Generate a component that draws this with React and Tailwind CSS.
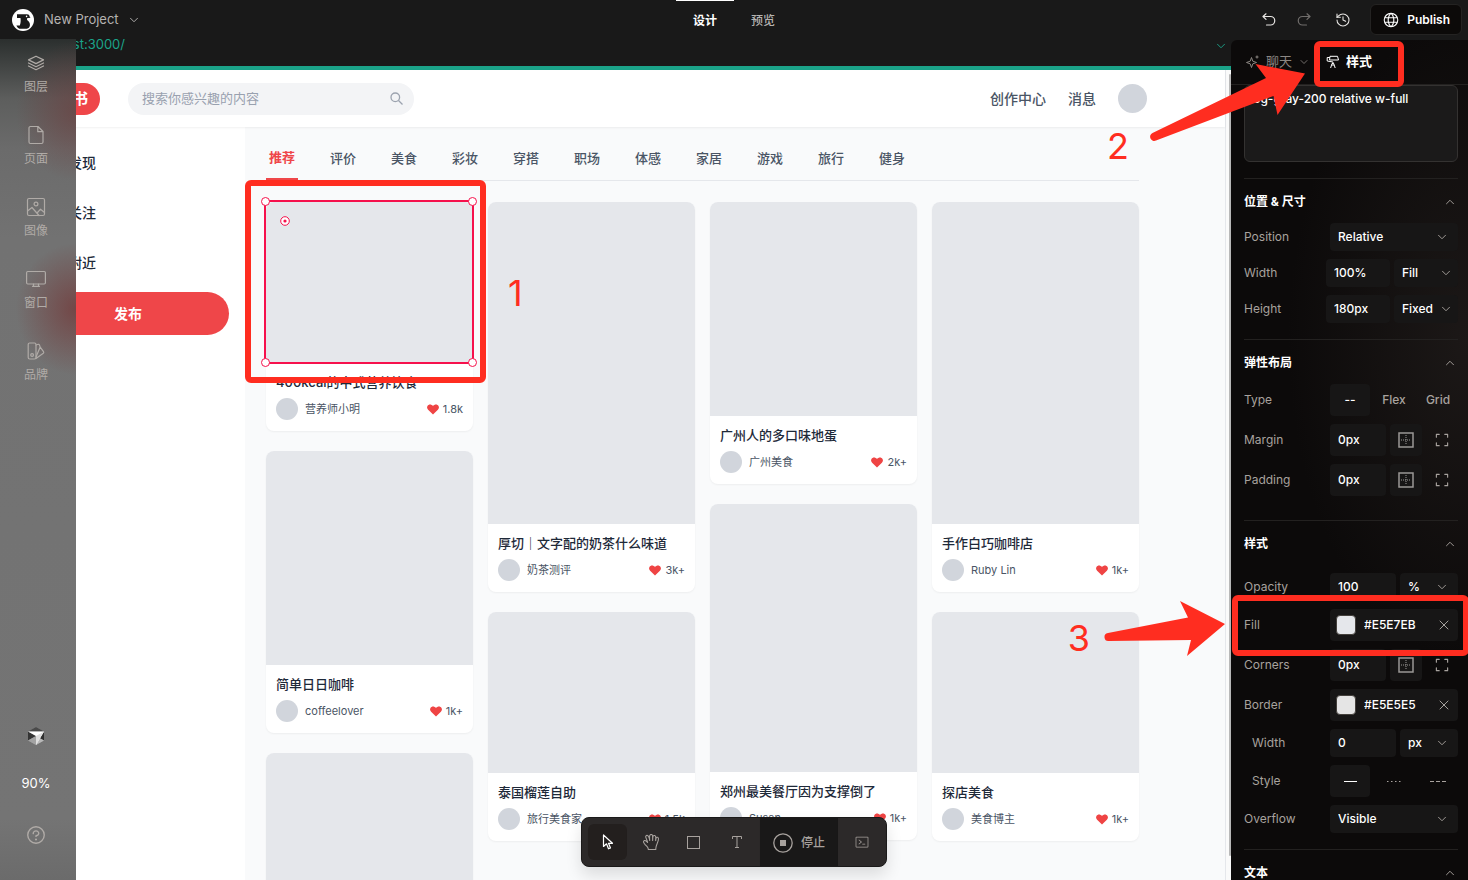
import React from 'react';
import { ChevronDown, ChevronUp, X, History } from 'lucide-react';
import { PiQuestion, PiGlobe, PiTerminalWindowLight, PiCornersOut } from 'react-icons/pi';
import { RxHand } from 'react-icons/rx';

function RailIcon({ children }) {
  return (
    <svg className="size-5" viewBox="0 0 20 20" fill="none" stroke="currentColor" strokeWidth="1.200" strokeLinecap="round" strokeLinejoin="round" aria-hidden="true">
      {children}
    </svg>
  );
}

const sideItems = [
  {
    label: '图层',
    icon: <RailIcon><path d="M10 3.200l7.500 3.700L10 10.600 2.500 6.900zM2.500 10l7.500 3.700 7.500-3.700M2.500 13l7.500 3.700 7.500-3.700" /></RailIcon>,
  },
  {
    label: '页面',
    icon: <RailIcon><path d="M4.500 1.500h7.500l5 5v10.500a1.500 1.500 0 0 1-1.500 1.500h-11A1.500 1.500 0 0 1 3 17V3a1.500 1.500 0 0 1 1.500-1.500zM11.800 1.500v5.200h5" /></RailIcon>,
  },
  {
    label: '图像',
    icon: <RailIcon><rect x="1.500" y="1.500" width="17" height="17" rx="1.500" /><circle cx="10" cy="7" r="1.900" /><path d="M1.500 14l4.500-3.500 7 8M11.500 15.500l3-3.300 4 3.300" /></RailIcon>,
  },
  {
    label: '窗口',
    icon: <RailIcon><rect x=".6" y="2.500" width="18.800" height="12.500" rx="1.200" /><path d="M7.500 15v2.300h5V15M6.500 17.300h7" /></RailIcon>,
  },
  {
    label: '品牌',
    icon: <RailIcon><rect x="2.200" y="2" width="7.800" height="16" rx="1.500" /><circle cx="6.100" cy="14" r="1.400" /><path d="M10 4l2.200-.7a1 1 0 0 1 1.200.6l.8 2.200L10 16M14.200 6.100l3.300 4.500a1.200 1.200 0 0 1-.2 1.600L10 17.500" /></RailIcon>,
  },
];

const categories = ['推荐', '评价', '美食', '彩妆', '穿搭', '职场', '体感', '家居', '游戏', '旅行', '健身'];

const columns = [
  [
    { h: 'h-[161px]', title: '400kcal的中式营养饮食', author: '营养师小明', likes: '1.8k', selected: true },
    { h: 'h-[214px]', title: '简单日日咖啡', author: 'coffeelover', likes: '1k+' },
    { h: 'h-[268px]' },
  ],
  [
    { h: 'h-[322px]', title: '厚切｜文字配的奶茶什么味道', author: '奶茶测评', likes: '3k+' },
    { h: 'h-[161px]', title: '泰国榴莲自助', author: '旅行美食家', likes: '1.5k' },
  ],
  [
    { h: 'h-[214px]', title: '广州人的多口味地蛋', author: '广州美食', likes: '2k+' },
    { h: 'h-[268px]', title: '郑州最美餐厅因为支撑倒了', author: 'Susan', likes: '1k+' },
  ],
  [
    { h: 'h-[322px]', title: '手作白巧咖啡店', author: 'Ruby Lin', likes: '1k+' },
    { h: 'h-[161px]', title: '探店美食', author: '美食博主', likes: '1k+' },
  ],
];

function Logo() {
  return (
    <svg className="size-[22px]" viewBox="0 0 22 22" aria-hidden="true">
      <circle cx="11" cy="11" r="11" fill="#fff" />
      <path d="M5 5.200h10c1.600 0 2.400.9 2.600 2.200l.9 1.300-2.600.2c-1.100.3-1.300 1.300-.5 2.400 1.700 1.300 2.800 2.900 2.500 5.100-.3 1.700-1.300 2.900-3 3.300H7.500c-1.500-.6-2.600-1.900-3.100-3.300h3.400c.9-2.200 1.100-4.700.7-7.400H5z" fill="#191919" />
      <circle cx="14.600" cy="7.400" r=".8" fill="#fff" />
    </svg>
  );
}

function CubeLogo() {
  return (
    <svg className="size-[18px]" viewBox="0 0 18 18" aria-hidden="true">
      <path d="M9 0l8 4.500v9L9 18l-8-4.500v-9z" fill="#8b8b8b" />
      <path d="M9 0l8 4.500H1z" fill="#4a4a4a" />
      <path d="M1 4.500L9 9 1 13.500z" fill="#343434" />
      <path d="M1 13.500L9 9v9z" fill="#a3a3a3" />
      <path d="M17 4.500v9l-4-2.300z" fill="#2e2e2e" />
      <path d="M17 13.500L9 18l3.500-7z" fill="#b9b9b9" />
      <path d="M1 4.500h16L9 18V9z" fill="#fff" />
      <path d="M17 4.500L9 9v9z" fill="#dedede" />
    </svg>
  );
}

function UndoIcon() {
  return (
    <svg className="size-[14px]" viewBox="0 0 14 14" fill="none" stroke="currentColor" strokeWidth="1.200" aria-hidden="true">
      <path d="M4 .8L1 3.500l3 2.900M1 3.500h7.500a4.200 4.200 0 0 1 0 8.500H4.500" strokeLinecap="round" strokeLinejoin="round" />
    </svg>
  );
}

function SparkleIcon() {
  return (
    <svg className="size-[15px]" viewBox="0 0 15 15" fill="none" stroke="currentColor" strokeWidth="1" aria-hidden="true">
      <path d="M6.500 2.500l1.300 3.700L11.500 7.500 7.800 8.800 6.500 12.500 5.200 8.800 1.500 7.500l3.700-1.300z" strokeLinejoin="round" />
      <path d="M12 .5v3M10.500 2h3" />
    </svg>
  );
}

function RollerIcon() {
  return (
    <svg className="size-[14px]" viewBox="0 0 14 14" fill="none" stroke="currentColor" strokeWidth="1" strokeLinejoin="round" aria-hidden="true">
      <path d="M4 1.300h7.500l1 3.700H3.500z" />
      <path d="M3.800 2.500H1.200v3.500l5.800 1v1.500" />
      <path d="M6 8.500h1.700l1.500 4.500M6 8.500L4.600 13M7 8.500V11" />
    </svg>
  );
}

function BoxSidesIcon() {
  return (
    <svg className="size-4" viewBox="0 0 16 16" fill="none" stroke="#9b9896" aria-hidden="true">
      <rect x="1" y="1" width="14" height="14" strokeWidth="1.500" />
      <path d="M8 3v10M3 8h10" strokeWidth="1" strokeDasharray="1 1" />
    </svg>
  );
}

function Heart() {
  return (
    <svg className="h-[11px] w-3" viewBox="0 0 24 22" fill="#ef4444" aria-hidden="true">
      <path d="M12 21L2.200 11.300A6.300 6.300 0 0 1 1 3.800C3 .1 8.700-.4 12 4c3.300-4.400 9-3.900 11-.2a6.300 6.300 0 0 1-1.200 7.500z" />
    </svg>
  );
}

function TopBar() {
  return (
    <header className="flex h-[39px] shrink-0 items-center px-[6px]">
      <div className="flex flex-1 items-center">
        <span className="ml-[6px]"><Logo /></span>
        <button className="ml-[10px] flex items-center gap-2 text-[13px] text-[#b5b3b1]">
          New Project <ChevronDown className="size-[14px]" strokeWidth={1.6} />
        </button>
      </div>
      <nav className="flex h-full text-[12px]">
        <button className="border-t border-white px-[17px] pt-px font-bold text-white">设计</button>
        <button className="border-t border-transparent px-[17px] pt-px font-medium text-[#b5b3b1]">预览</button>
      </nav>
      <div className="flex flex-1 items-center justify-end text-[#e8e6e4]">
        <button aria-label="Undo"><UndoIcon /></button>
        <button aria-label="Redo" className="ml-[21px] -scale-x-100 text-[#716e6c]"><UndoIcon /></button>
        <button aria-label="History" className="ml-6"><History className="size-4" strokeWidth={1.6} /></button>
        <button className="ml-[19px] flex h-[31px] items-center gap-[7px] rounded-md border border-[#242322] bg-[#0c0a09] px-[11px] text-[12px] font-semibold text-white">
          <PiGlobe className="size-[18px]" /> Publish
        </button>
      </div>
    </header>
  );
}

function SideRail() {
  return (
    <aside className="z-10 flex w-[76px] shrink-0 flex-col items-center bg-[radial-gradient(ellipse_60px_70px_at_76px_72px,rgba(110,60,60,0.6),transparent),radial-gradient(ellipse_60px_66px_at_76px_270px,rgba(115,60,60,0.8),transparent),linear-gradient(to_bottom,#2b2f2e_0,#3f4241_24px,#5d5e5d_60px,#6b6b6b_110px,#727272_200px,#747474_780px,#6b6b6b_100%)] pr-1 text-[#b0aba7]">
      {sideItems.map(({ icon, label }) => (
        <button key={label} className="flex h-[72px] w-full flex-col items-center gap-[5px] pt-[14px] text-[12px] leading-[18px]">
          {icon}
          {label}
        </button>
      ))}
      <button aria-label="Editor" className="mt-auto"><CubeLogo /></button>
      <span className="mt-7 text-[13px] leading-5 text-white">90%</span>
      <button aria-label="Help" className="mt-[31px] mb-[34px]"><PiQuestion className="size-[22px]" /></button>
    </aside>
  );
}

function Selection() {
  const dot = 'absolute size-[9px] rounded-full border border-[#f6114c] bg-white';
  return (
    <div className="absolute -top-[2px] -right-px -bottom-px -left-[2px] border-2 border-[#f6114c]">
      <span className={`${dot} -top-[5px] -left-[5px]`} />
      <span className={`${dot} -top-[5px] -right-[5px]`} />
      <span className={`${dot} -bottom-[5px] -left-[5px]`} />
      <span className={`${dot} -right-[5px] -bottom-[5px]`} />
      <svg className="absolute top-[14px] left-[14px] size-[10px]" viewBox="0 0 10 10" aria-hidden="true">
        <circle cx="5" cy="5" r="4.300" fill="#fff" stroke="#f6114c" />
        <circle cx="5" cy="5" r="1.600" fill="#f6114c" />
      </svg>
    </div>
  );
}

function Card({ h, title, author, likes, selected }) {
  return (
    <article className="shrink-0 rounded-lg bg-white shadow-[0_1px_2px_rgba(0,0,0,0.05)]">
      <div className={`relative rounded-t-lg bg-gray-200 ${h}`}>{selected && <Selection />}</div>
      {title && (
        <div className="h-[68px] px-[10px] pt-[10px]">
          <h3 className="truncate text-[13px] leading-[18px] font-medium text-gray-800">{title}</h3>
          <div className="mt-[7px] flex items-center text-[11px] leading-[22px] text-gray-600">
            <span className="mr-[7px] size-[22px] rounded-full bg-gray-300" />
            {author}
            <span className="ml-auto flex items-center gap-1"><Heart />{likes}</span>
          </div>
        </div>
      )}
    </article>
  );
}

function Preview() {
  return (
    <main className="-ml-[76px] flex min-w-0 flex-1 flex-col overflow-hidden">
      <div className="flex h-[27px] shrink-0 items-start justify-between pr-[3px] text-[13px] leading-[11px] text-[#1ba389]">
        <span className="w-[125px] text-right">localhost:3000/</span>
        <button aria-label="Pages"><ChevronDown className="size-[14px]" strokeWidth={1.600} /></button>
      </div>
      <div className="flex min-h-0 flex-1 border-t-4 border-[#1ba389] bg-gray-50">
        <div className="flex min-w-0 flex-1 flex-col">
          <header className="z-[1] flex h-[57px] shrink-0 items-center bg-white pr-[78px] pl-[29px] shadow-[0_1px_2px_rgba(0,0,0,0.06)]">
            <a href="#home" className="w-[71px] rounded-full bg-[#ef4649] pr-3 text-right text-[15px] leading-8 font-bold whitespace-nowrap text-white">小红书</a>
            <label className="ml-7 flex h-8 w-[286px] items-center rounded-full bg-gray-100 px-[14px]">
              <input aria-label="搜索" placeholder="搜索你感兴趣的内容" className="min-w-0 flex-1 bg-transparent text-[13px] text-gray-600 outline-none placeholder:text-gray-400" />
              <svg className="mr-[-3px] size-[13px]" viewBox="0 0 13 13" fill="none" stroke="#9ca3af" strokeWidth="1.300" aria-hidden="true">
                <circle cx="5.300" cy="5.300" r="4.300" /><path d="M8.500 8.500l4 4" />
              </svg>
            </label>
            <nav className="ml-auto flex items-center gap-[22px] text-[14px] text-gray-600">
              <a href="#studio" className="font-medium">创作中心</a>
              <a href="#messages" className="font-medium">消息</a>
              <span className="size-[29px] rounded-full bg-gray-300" />
            </nav>
          </header>
          <div className="flex min-h-0 flex-1">
            <nav className="w-[245px] shrink-0 bg-white pt-[11px] pr-4 pl-[27px] text-[14px] text-gray-800">
              {['发现', '关注', '附近'].map((t) => (
                <a key={t} href="#nav" className="block h-[50px] pl-[41px] leading-[50px] font-medium">{t}</a>
              ))}
              <button className="mt-1 h-[43px] w-full rounded-full bg-[#ef4649] font-bold text-white">发布</button>
            </nav>
            <section className="flex min-w-0 flex-1 flex-col overflow-hidden pr-[86px] pl-[21px]">
              <div className="mb-[21px] flex h-[54px] shrink-0 gap-[29px] border-b border-gray-200 pt-[10px] text-[13px] text-gray-600">
                {categories.map((c, i) => (
                  <button
                    key={c}
                    className={i === 0 ? 'h-[43px] w-8 border-b-2 border-[#ef4649] font-bold text-[#ef4649]' : 'h-[43px] w-8 font-medium'}
                  >
                    {c}
                  </button>
                ))}
              </div>
              <div className="grid grid-cols-4 gap-[15px]">
                {columns.map((col, i) => (
                  <div key={i} className="flex min-w-0 flex-col gap-5">
                    {col.map((card, j) => <Card key={j} {...card} />)}
                  </div>
                ))}
              </div>
            </section>
          </div>
        </div>
        <div className="flex w-[6px] shrink-0 justify-end border-l border-gray-200 bg-[#fafafa] pt-1 pb-6">
          <span className="w-[2px] rounded-full bg-[#b8b8b8]" />
        </div>
      </div>
    </main>
  );
}

const fieldBase = 'rounded bg-[#171616] text-[12px] font-medium text-white';

function Row({ label, children, tall, wide, indent, id }) {
  return (
    <div className={`flex items-center ${tall ? 'h-8' : 'h-7'} ${indent ? 'pl-2' : ''}`}>
      <label htmlFor={id} className="flex-1 text-[12px] text-[#a8a29e]">{label}</label>
      <div className={`flex h-full gap-1 ${wide ? 'w-[132px]' : 'w-32'}`}>{children}</div>
    </div>
  );
}

function Field({ id, value, className = 'flex-1' }) {
  return <input id={id} defaultValue={value} className={`${fieldBase} h-full min-w-0 px-2 pb-px outline-none ${className}`} />;
}

function Select({ id, value, label, tight, className = 'flex-1' }) {
  return (
    <div className={`relative h-full min-w-0 ${className}`}>
      <select id={id} aria-label={label} className={`${fieldBase} h-full w-full appearance-none pl-2 outline-none`}>
        <option>{value}</option>
      </select>
      <ChevronDown className={`pointer-events-none absolute inset-y-0 my-auto size-[14px] text-[#a8a29e] ${tight ? 'right-[5px]' : 'right-[9px]'}`} strokeWidth={1.6} />
    </div>
  );
}

function Sides({ id, label }) {
  return (
    <Row label={label} id={id} tall>
      <Field id={id} value="0px" className="w-14" />
      <button aria-label={`${label} all`} className="flex w-8 items-center justify-center rounded bg-[#171616]"><BoxSidesIcon /></button>
      <button aria-label={`${label} each`} className="flex w-8 items-center justify-center text-[#a8a29e]"><PiCornersOut className="size-[18px]" /></button>
    </Row>
  );
}

function Swatch({ id, label, value, color }) {
  return (
    <Row label={label} id={id} tall>
      <div className="flex w-full items-center rounded bg-[#171616] px-[6px]">
        <span className={`size-5 rounded-sm border border-[#44403c] ${color}`} />
        <input id={id} defaultValue={value} className="ml-2 w-[68px] bg-transparent text-[12px] font-medium text-white outline-none" />
        <button aria-label={`Clear ${label}`} className="ml-auto text-[#bdb8b4]"><X className="size-4" strokeWidth={1.3} /></button>
      </div>
    </Row>
  );
}

function Section({ title, children, className = 'pb-4' }) {
  return (
    <section className={`shrink-0 border-t border-[#232120] ${className}`}>
      <button className="flex h-11 w-full items-center justify-between pt-px pr-px text-[12px] font-bold text-white">
        {title} <ChevronUp className="size-[14px] text-[#a8a29e]" strokeWidth={1.6} />
      </button>
      <div className="flex flex-col gap-2">{children}</div>
    </section>
  );
}

function StylePanel() {
  return (
    <aside className="mt-px flex w-[237px] shrink-0 flex-col overflow-hidden rounded-tl-md bg-[radial-gradient(ellipse_180px_320px_at_100%_300px,#1c1817,transparent),linear-gradient(#0c0a0a,#0c0a0a)]">
      <div className="flex h-[45px] shrink-0 items-center border-b border-[#232120] pl-[14px] text-[13px]">
        <button className="flex items-center gap-[6px] text-[#8c8783]"><SparkleIcon />聊天<ChevronDown className="size-3" strokeWidth={1.600} /></button>
        <button className="ml-4 flex items-center gap-[6px] font-bold text-white"><RollerIcon />样式</button>
      </div>
      <div className="flex flex-1 flex-col overflow-hidden pr-[10px] pl-[13px]">
        <textarea aria-label="Classes" defaultValue="bg-gray-200 relative w-full" className="mb-4 h-[77px] shrink-0 resize-none rounded-md border border-[#343231] bg-[#1b1a1a] px-2 py-[5px] text-[12px] leading-4 font-medium text-white outline-none" />
        <Section title="位置 & 尺寸">
          <Row label="Position" id="pos"><Select id="pos" value="Relative" /></Row>
          <Row label="Width" id="w" wide><Field id="w" value="100%" className="w-16" /><Select label="Width mode" value="Fill" tight className="w-16" /></Row>
          <Row label="Height" id="h" wide><Field id="h" value="180px" className="w-16" /><Select label="Height mode" value="Fixed" tight className="w-16" /></Row>
        </Section>
        <Section title="弹性布局" className="pb-6">
          <Row label="Type" tall>
            <button className={`${fieldBase} flex-1`}>--</button>
            <button className="flex-1 text-[12px] font-medium text-[#a8a29e]">Flex</button>
            <button className="flex-1 text-[12px] font-medium text-[#a8a29e]">Grid</button>
          </Row>
          <Sides id="margin" label="Margin" />
          <Sides id="padding" label="Padding" />
        </Section>
        <Section title="样式">
          <div className="pt-2"><Row label="Opacity" id="op"><Field id="op" value="100" /><Select label="Opacity unit" value="%" className="w-[58px]" /></Row></div>
          <Swatch id="fill" label="Fill" value="#E5E7EB" color="bg-[#e5e7eb]" />
          <Sides id="corners" label="Corners" />
          <Swatch id="border" label="Border" value="#E5E5E5" color="bg-[#e5e5e5]" />
          <Row label="Width" id="bw" indent><Field id="bw" value="0" /><Select label="Border unit" value="px" className="w-[58px]" /></Row>
          <Row label="Style" tall indent>
            <button aria-label="Solid" className={`${fieldBase} flex flex-1 items-center justify-center`}><svg className="h-px w-[13px]" aria-hidden="true"><path d="M0 .5h13" stroke="#fff" /></svg></button>
            <button aria-label="Dotted" className="flex flex-1 items-center justify-center"><svg className="h-px w-[14px]" aria-hidden="true"><path d="M0 .5h14" stroke="#a8a29e" strokeDasharray="1.500 2.500" /></svg></button>
            <button aria-label="Dashed" className="flex flex-1 items-center justify-center"><svg className="h-px w-[16px]" aria-hidden="true"><path d="M0 .5h16" stroke="#a8a29e" strokeDasharray="4 2" /></svg></button>
          </Row>
          <Row label="Overflow" id="of"><Select id="of" value="Visible" /></Row>
        </Section>
        <Section title="文本" />
      </div>
    </aside>
  );
}

function Toolbar() {
  const tool = 'flex h-9 w-[39px] items-center justify-center rounded-md';
  return (
    <div className="absolute bottom-[13px] left-1/2 z-20 flex h-[50px] -translate-x-1/2 items-center overflow-hidden rounded-lg border border-[#1a1919] bg-[#2c2929] pl-[6px] text-[#a8a29e] shadow-[0_8px_16px_rgba(0,0,0,0.12)]">
      <div className="flex gap-1 pr-1">
        <button aria-label="Select" className={`${tool} bg-[#231f1e] text-white`}>
          <svg className="size-4" viewBox="0 0 16 16" fill="none" stroke="currentColor" strokeWidth="1.200" strokeLinejoin="round" aria-hidden="true">
            <path d="M3.500 1v11.500l3-2.700 2 5 2-.9-2-4.600h4z" />
          </svg>
        </button>
        <button aria-label="Hand" className={tool}><RxHand className="size-4" /></button>
        <button aria-label="Rectangle" className={tool}>
          <svg className="size-[13px]" viewBox="0 0 13 13" aria-hidden="true"><rect x=".5" y=".5" width="12" height="12" fill="none" stroke="currentColor" /></svg>
        </button>
        <button aria-label="Text" className={tool}>
          <svg className="size-3" viewBox="0 0 12 12" fill="none" stroke="currentColor" aria-hidden="true"><path d="M1.500 3V.5h9V3M6 .5v11M4 11.500h4" /></svg>
        </button>
      </div>
      <button className="flex h-full items-center gap-2 bg-[#191818] px-[13px] pt-px text-[12px] font-medium">
        <svg className="size-5" viewBox="0 0 20 20" fill="none" aria-hidden="true">
          <circle cx="10" cy="10" r="9.200" stroke="currentColor" strokeWidth="1.300" /><rect x="7" y="7" width="6" height="6" fill="currentColor" />
        </svg>
        停止
      </button>
      <button aria-label="Terminal" className="flex h-full w-12 items-center justify-center"><PiTerminalWindowLight className="size-4" /></button>
    </div>
  );
}

function Annotations() {
  const box = 'absolute rounded-md border-[6px] border-[#ff2d20]';
  const num = 'absolute text-[36px] leading-9 text-[#ff2d20]';
  return (
    <div className="pointer-events-none absolute inset-0 z-30 overflow-hidden">
      <span className={`${box} top-[180px] left-[245px] h-[203px] w-[241px]`} />
      <span className={`${box} top-[41px] right-[64px] h-[46px] w-[90px]`} />
      <span className={`${box} top-[595px] -right-[1px] h-[61px] w-[237px]`} />
      <span className={`${num} top-[275px] left-[508px]`}>1</span>
      <span className={`${num} top-[128px] right-[339px]`}>2</span>
      <span className={`${num} top-[620px] right-[378px]`}>3</span>
      <svg className="absolute top-[60px] right-[160px] h-[84px] w-[160px]" viewBox="0 0 160 84" fill="#ff2d20" aria-hidden="true">
        <path d="M4.500 73L118 18 107.500 4 157 13.500 129.500 55l-4-19L8 80.500A4 4 0 0 1 4.500 73z" />
      </svg>
      <svg className="absolute top-[598px] right-[240px] h-[60px] w-[126px]" viewBox="0 0 126 60" fill="#ff2d20" aria-hidden="true">
        <path d="M6 35L86 19.500 78 3l45 23-38 32 4-16L7 43a4 4 0 0 1-1-8z" />
      </svg>
    </div>
  );
}

export default function App() {
  return (
    <div className="relative flex h-screen flex-col overflow-hidden bg-[#191919] font-['Inter','Noto_Sans_CJK_SC',sans-serif]">
      <TopBar />
      <div className="flex min-h-0 flex-1">
        <SideRail />
        <Preview />
        <StylePanel />
      </div>
      <Toolbar />
      <Annotations />
    </div>
  );
}
